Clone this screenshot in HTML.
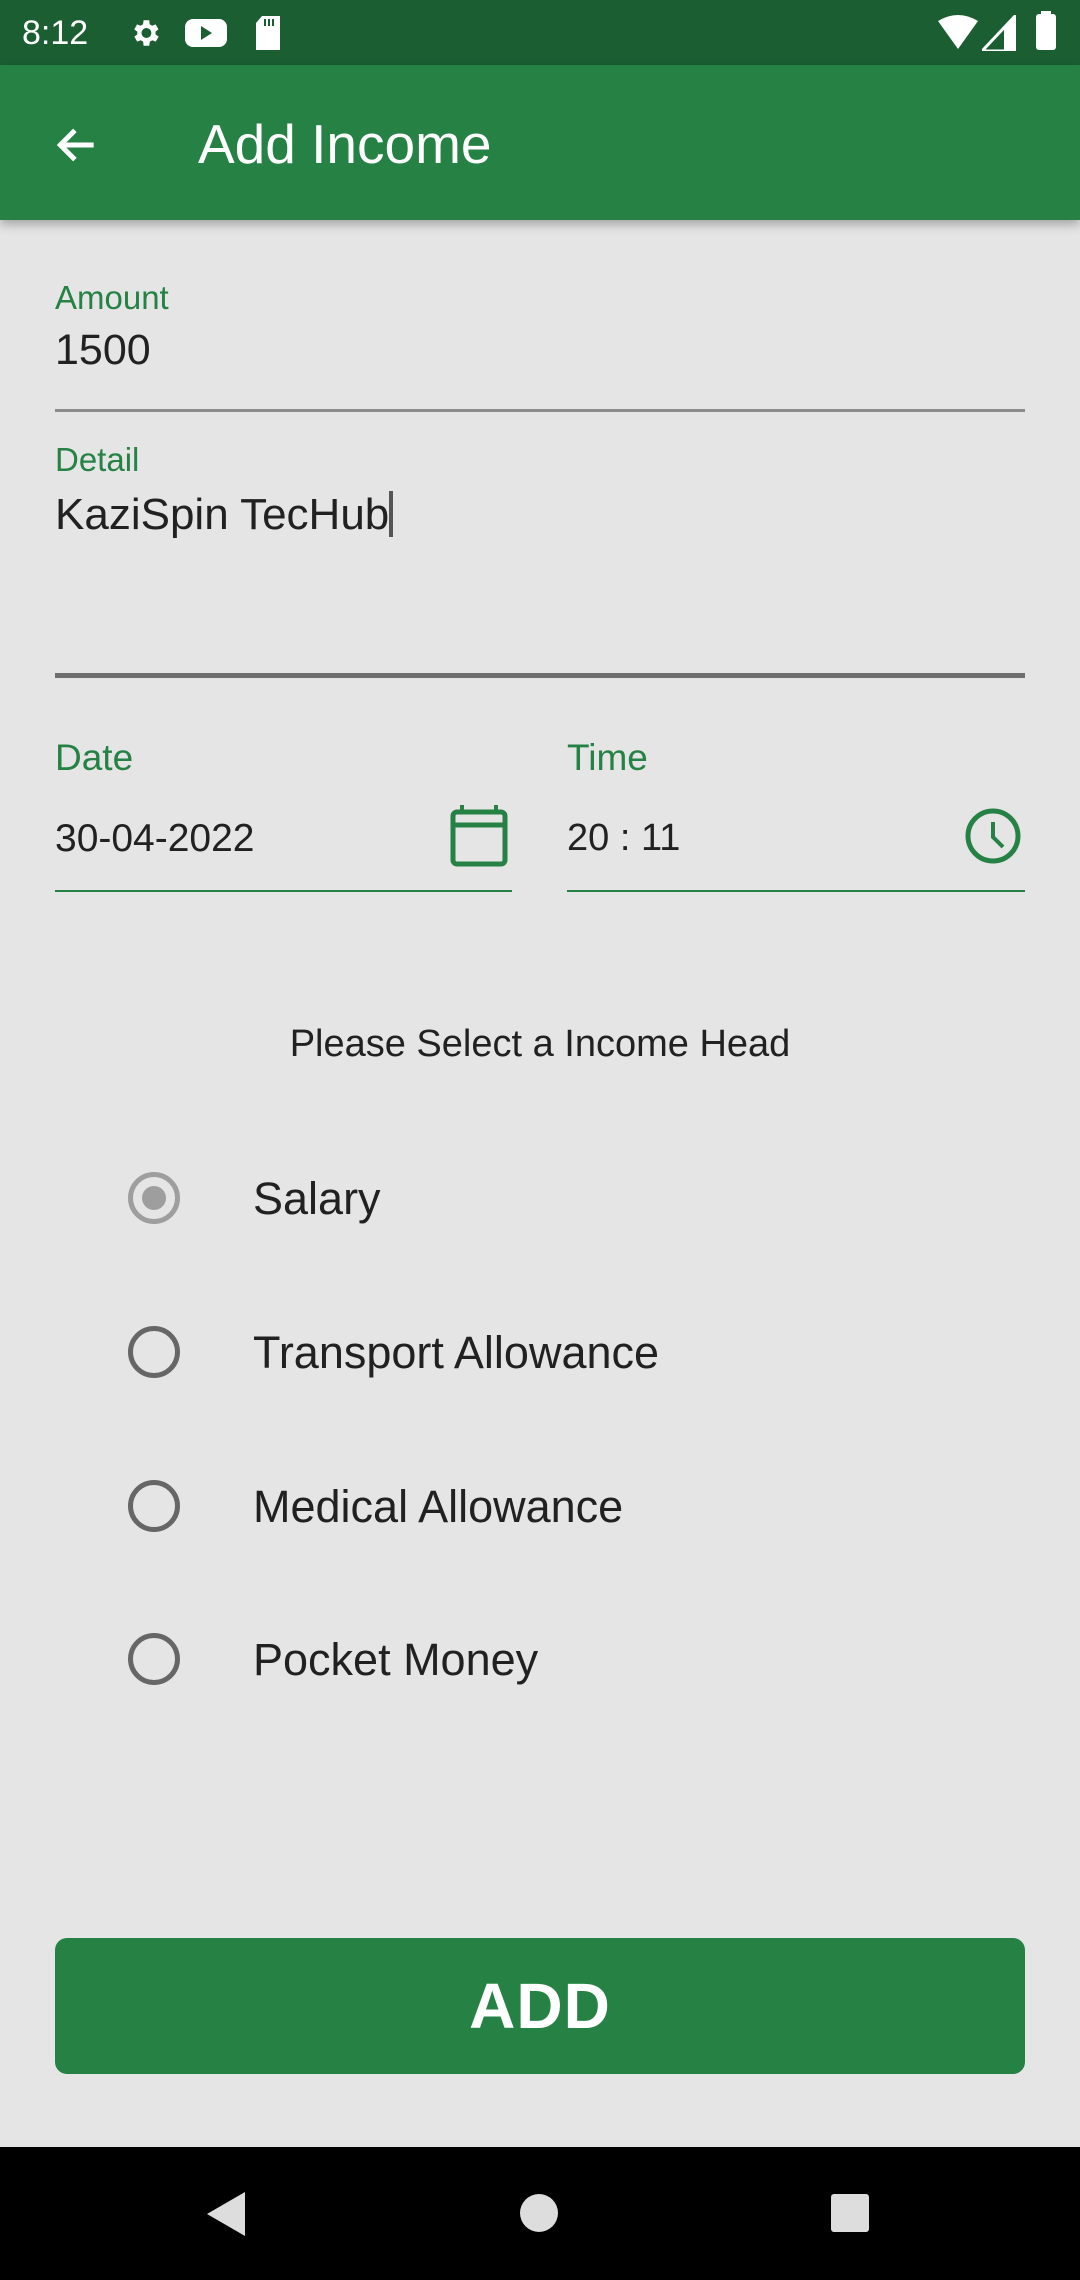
<!DOCTYPE html>
<html><head><meta charset="utf-8"><style>
*{margin:0;padding:0;box-sizing:border-box}
body{width:1080px;height:2280px;background:#e5e5e5;font-family:"Liberation Sans",sans-serif;position:relative;overflow:hidden;color:#212121}
.a{position:absolute}
.sb{top:0;left:0;width:1080px;height:65px;background:#1b5e32}
.ab{top:65px;left:0;width:1080px;height:155px;background:#258244;box-shadow:0 4px 10px rgba(0,0,0,.3)}
.lbl{color:#258244;font-size:33px;line-height:1}
.val{font-size:43px;line-height:1}
.rad{width:52px;height:52px;border:5px solid #666;border-radius:50%}
.rl{font-size:45px;line-height:1;left:253px}
</style></head><body>
<div class="a sb"></div>
<div class="a" style="left:22px;top:14px;color:#fff;font-size:34px">8:12</div>
<svg class="a" style="left:128px;top:16px" width="34" height="34" viewBox="0 0 24 24"><path fill="#fff" d="M19.4 13a7.5 7.5 0 000-2l2.1-1.6-2-3.5-2.5 1a7 7 0 00-1.7-1L15 3h-4l-.4 2.9a7 7 0 00-1.7 1l-2.5-1-2 3.5L6.6 11a7.5 7.5 0 000 2l-2.1 1.6 2 3.5 2.5-1a7 7 0 001.7 1L11 21h4l.4-2.9a7 7 0 001.7-1l2.5 1 2-3.5zM13 15.5a3.5 3.5 0 110-7 3.5 3.5 0 010 7z"/></svg>
<svg class="a" style="left:184px;top:16px" width="44" height="34" viewBox="0 0 44 34"><rect x="1" y="3" width="42" height="28" rx="8" fill="#fff"/><path d="M17 10v14l11-7z" fill="#1b5e32"/></svg>
<svg class="a" style="left:254px;top:15px" width="28" height="36" viewBox="0 0 28 36"><path d="M8 1h18v34H2V8z" fill="#fff"/><path d="M11 4v7M15 4v7M19 4v7" stroke="#1b5e32" stroke-width="2"/></svg>
<svg class="a" style="left:938px;top:15px" width="40" height="36" viewBox="0 0 40 36"><path d="M0 6Q20-6 40 6L20 34z" fill="#fff"/></svg>
<svg class="a" style="left:982px;top:15px" width="34" height="36" viewBox="0 0 34 36"><path d="M34 0V36H0z" fill="none" stroke="#fff" stroke-width="3"/><path d="M34 0V36H22V14z" fill="#fff"/></svg>
<div class="a" style="left:1036px;top:14px;width:20px;height:36px;background:#fff;border-radius:3px"></div>
<div class="a" style="left:1041px;top:11px;width:10px;height:5px;background:#fff"></div>
<div class="a ab"></div>
<svg class="a" style="left:52px;top:120px" width="50" height="50" viewBox="0 0 24 24"><path d="M20 12H5M11 5l-7 7 7 7" stroke="#fff" stroke-width="2.4" fill="none"/></svg>
<div class="a" style="left:198px;top:112px;color:#fff;font-size:55px">Add Income</div>

<div class="a lbl" style="left:55px;top:281px">Amount</div>
<div class="a val" style="left:55px;top:329px">1500</div>
<div class="a" style="left:55px;top:409px;width:970px;height:3px;background:#8c8c8c"></div>
<div class="a lbl" style="left:55px;top:443px">Detail</div>
<div class="a val" style="left:55px;top:491px;font-size:44px">KaziSpin TecHub<span style="display:inline-block;width:4px;height:46px;background:#555;vertical-align:-8px"></span></div>
<div class="a" style="left:55px;top:673px;width:970px;height:5px;background:#6e6e6e"></div>

<div class="a" style="left:55px;top:737px;color:#258244;font-size:37px">Date</div>
<div class="a" style="left:567px;top:737px;color:#258244;font-size:37px">Time</div>
<div class="a" style="left:55px;top:817px;font-size:39px">30-04-2022</div>
<div class="a" style="left:567px;top:817px;font-size:38px">20 : 11</div>
<svg class="a" style="left:450px;top:805px" width="58" height="62" viewBox="0 0 58 62"><rect x="3" y="7" width="52" height="52" rx="4" fill="none" stroke="#258244" stroke-width="5"/><path d="M3 20h52" stroke="#258244" stroke-width="5"/><path d="M12 0v9M46 0v9" stroke="#258244" stroke-width="4"/></svg>
<svg class="a" style="left:963px;top:806px" width="60" height="60" viewBox="0 0 60 60"><circle cx="30" cy="30" r="25" fill="none" stroke="#258244" stroke-width="5"/><path d="M30 16v15l10 10" fill="none" stroke="#258244" stroke-width="4"/></svg>
<div class="a" style="left:55px;top:890px;width:457px;height:2px;background:#258244"></div>
<div class="a" style="left:567px;top:890px;width:458px;height:2px;background:#258244"></div>

<div class="a" style="left:0;width:1080px;top:1023px;text-align:center;font-size:38px">Please Select a Income Head</div>

<div class="a rad" style="left:128px;top:1172px;border-color:#9e9e9e"></div>
<div class="a" style="left:142px;top:1186px;width:24px;height:24px;border-radius:50%;background:#9e9e9e"></div>
<div class="a rl" style="top:1176px">Salary</div>
<div class="a rad" style="left:128px;top:1326px"></div>
<div class="a rl" style="top:1330px">Transport Allowance</div>
<div class="a rad" style="left:128px;top:1480px"></div>
<div class="a rl" style="top:1484px">Medical Allowance</div>
<div class="a rad" style="left:128px;top:1633px"></div>
<div class="a rl" style="top:1637px">Pocket Money</div>

<div class="a" style="left:55px;top:1938px;width:970px;height:136px;background:#258244;border-radius:12px;color:#fff;font-size:64px;font-weight:900;text-align:center;line-height:136px;letter-spacing:1px">ADD</div>

<div class="a" style="left:0;top:2147px;width:1080px;height:133px;background:#000"></div>
<svg class="a" style="left:205px;top:2192px" width="40" height="44" viewBox="0 0 40 44"><path d="M40 0V44L2 22z" fill="#ddd"/></svg>
<div class="a" style="left:520px;top:2194px;width:38px;height:38px;border-radius:50%;background:#ddd"></div>
<div class="a" style="left:831px;top:2194px;width:38px;height:38px;border-radius:3px;background:#ddd"></div>
</body></html>
